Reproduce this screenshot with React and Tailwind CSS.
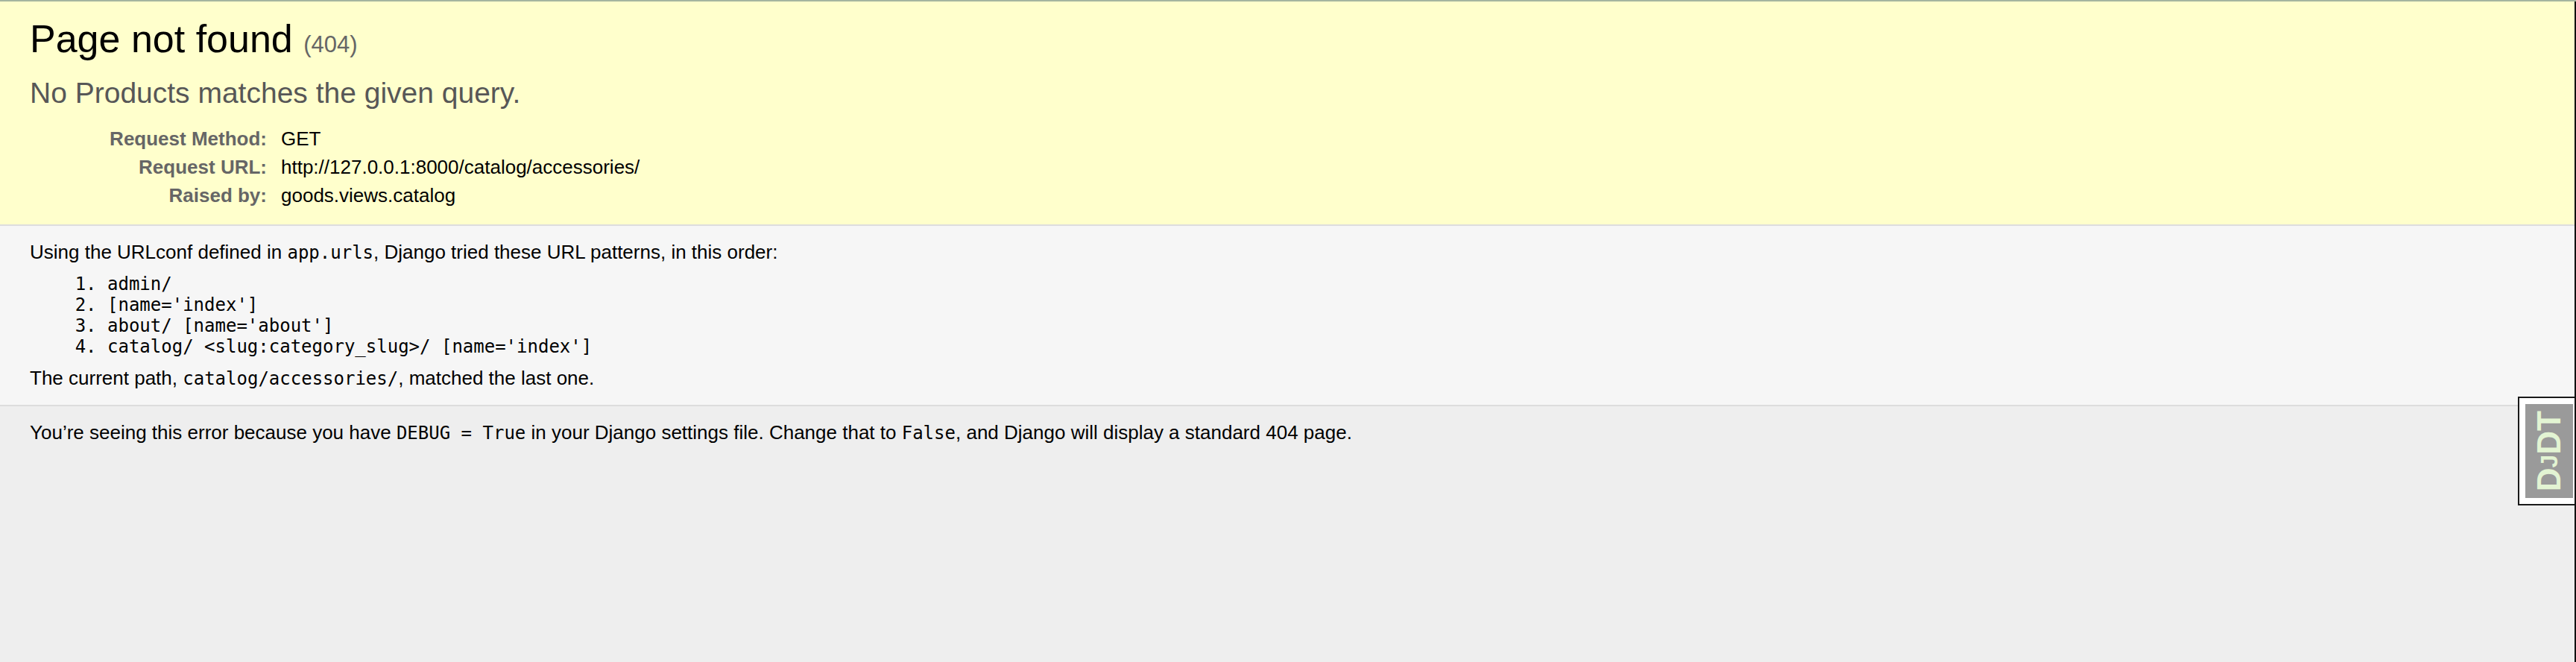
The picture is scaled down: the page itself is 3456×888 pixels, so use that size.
import React from 'react';

const requestInfo = [
  ['Request Method:', 'GET'],
  ['Request URL:', 'http://127.0.0.1:8000/catalog/accessories/'],
  ['Raised by:', 'goods.views.catalog'],
];

const patterns = [
  'admin/',
  "[name='index']",
  "about/ [name='about']",
  "catalog/ <slug:category_slug>/ [name='index']",
];

const Code = ({ children }) => (
  <code className="font-['DejaVu_Sans_Mono',monospace] text-[24px]">{children}</code>
);

// floating debug toolbar handle, sits over the page on the right
const DjdtHandle = () => (
  <div className="absolute right-0 top-[530px] flex border-y-2 border-l-2 border-[#1a1a1a] bg-white py-[8px] pl-[8px] pr-[2px]">
    <div className="flex h-[126px] w-[64px] items-center justify-center bg-[#9a9a9a]">
      <span className="rotate-180 font-['Liberation_Sans',Arial,sans-serif] text-[44px] font-bold leading-none text-[#e3f4d3] [writing-mode:vertical-rl]">
        D<span className="text-[32px]">J</span>DT
      </span>
    </div>
  </div>
);

export default function App() {
  return (
    <div className="flex min-h-[888px] flex-col bg-[#eeeeee] font-['Liberation_Sans',Arial,sans-serif] text-[26px] leading-[30px] text-black">
      <div className="h-[2px] bg-[#a5b5a0]" />
      <div className="flex flex-1">
        <div className="relative flex-1">
          {/* Summary */}
          <header className="border-b-2 border-[#dddddd] bg-[#ffffcc] px-[40px] py-[20px]">
            <h1 className="mb-[21px] text-[52px] font-normal leading-[60px]">
              Page not found <span className="text-[31px] leading-none text-[#666666]">(404)</span>
            </h1>
            <pre className="mb-[20px] whitespace-pre-wrap font-['Liberation_Sans',Arial,sans-serif] text-[39px] leading-[44px] text-[#575757]">
              No Products matches the given query.
            </pre>
            <table className="w-full border-collapse">
              <tbody>
                {requestInfo.map(([label, value]) => (
                  <tr key={label}>
                    <th className="w-[331px] py-[4px] pl-[6px] pr-[13px] text-right align-top font-bold text-[#666666]">
                      {label}
                    </th>
                    <td className="px-[6px] py-[4px] align-top">{value}</td>
                  </tr>
                ))}
              </tbody>
            </table>
          </header>

          {/* URL patterns */}
          <main className="border-b-2 border-[#dddddd] bg-[#f6f6f6] px-[40px] py-[20px]">
            <p>
              Using the URLconf defined in <Code>app.urls</Code>, Django tried these URL patterns, in this order:
            </p>
            <ol className="mx-[104px] my-[13px] list-decimal">
              {patterns.map((p) => (
                <li key={p} className="whitespace-pre font-['DejaVu_Sans_Mono',monospace] text-[24px] leading-[28px]">
                  {p}
                </li>
              ))}
            </ol>
            <p>
              The current path, <Code>catalog/accessories/</Code>, matched the last one.
            </p>
          </main>

          {/* Explanation */}
          <footer className="bg-[#eeeeee] px-[40px] py-[20px]">
            <p>
              You’re seeing this error because you have <Code>DEBUG = True</Code> in your Django settings file. Change
              that to <Code>False</Code>, and Django will display a standard 404 page.
            </p>
          </footer>

          <DjdtHandle />
        </div>
        <div className="w-[2px] bg-[#111111]" />
      </div>
    </div>
  );
}
